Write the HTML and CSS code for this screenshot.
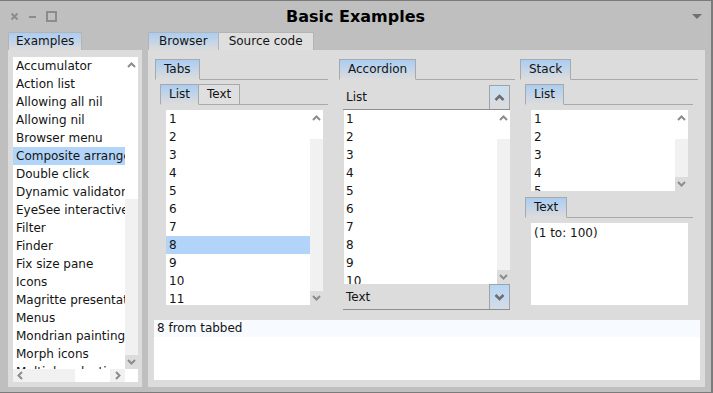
FILE: index.html
```html
<!DOCTYPE html>
<html lang="en">
<head>
    <meta charset="UTF-8">
    <title>Basic Examples</title>
    <link rel="stylesheet" href="styles.css">
</head>
<body>
<div class="window">

    <!-- Title bar -->
    <div class="titlebar">
        <div class="controls">
            <svg width="9" height="9" viewBox="0 0 9 9"><path d="M1.5 1.5 L7.5 7.5 M7.5 1.5 L1.5 7.5" stroke="#8c8c8c" stroke-width="2"/></svg>
            <svg width="9" height="9" viewBox="0 0 9 9"><path d="M1 5 H8" stroke="#8c8c8c" stroke-width="2"/></svg>
            <svg width="11" height="11" viewBox="0 0 11 11"><rect x="1" y="1" width="9" height="9" fill="none" stroke="#8c8c8c" stroke-width="2"/></svg>
        </div>
        <div class="title">Basic Examples</div>
        <div class="menu">
            <svg width="10" height="6" viewBox="0 0 10 6"><path d="M0 0 H10 L5 5 Z" fill="#707070"/></svg>
        </div>
    </div>

    <div class="main">
        <!-- Examples pane -->
        <div class="pane side">
            <div class="toptabs">
                <div class="tab active">Examples</div>
            </div>
            <div class="pane-body side-body">
                <div class="scrollbox">
                    <div class="scrollrow">
                        <ul class="list">
                            <li>Accumulator</li>
                            <li>Action list</li>
                            <li>Allowing all nil</li>
                            <li>Allowing nil</li>
                            <li>Browser menu</li>
                            <li class="selected">Composite arrangement</li>
                            <li>Double click</li>
                            <li>Dynamic validator</li>
                            <li>EyeSee interactive</li>
                            <li>Filter</li>
                            <li>Finder</li>
                            <li>Fix size pane</li>
                            <li>Icons</li>
                            <li>Magritte presentation</li>
                            <li>Menus</li>
                            <li>Mondrian painting</li>
                            <li>Morph icons</li>
                            <li>Multiple selection</li>
                        </ul>
                        <div class="vscroll">
                            <div class="thumb thumb-examples"><svg class="arrow" width="9" height="6" viewBox="0 0 9 6"><path d="M1 5 L4.5 1.5 L8 5" fill="none" stroke="#8c8c8c" stroke-width="2"/></svg></div>
                            <div class="track"></div>
                            <div class="down"><svg width="9" height="6" viewBox="0 0 9 6"><path d="M1 1 L4.5 4.5 L8 1" fill="none" stroke="#8c8c8c" stroke-width="2"/></svg></div>
                        </div>
                    </div>
                    <div class="hscroll">
                        <div class="htrack left"><svg width="6" height="9" viewBox="0 0 6 9"><path d="M5 1 L1.5 4.5 L5 8" fill="none" stroke="#8c8c8c" stroke-width="2"/></svg></div>
                        <div class="hthumb"></div>
                        <div class="htrack right"><svg width="6" height="9" viewBox="0 0 6 9"><path d="M1 1 L4.5 4.5 L1 8" fill="none" stroke="#8c8c8c" stroke-width="2"/></svg></div>
                        <div class="corner"></div>
                    </div>
                </div>
            </div>
        </div>

        <!-- Browser pane -->
        <div class="pane browser">
            <div class="toptabs">
                <div class="tab active">Browser</div>
                <div class="tab">Source code</div>
            </div>
            <div class="pane-body browser-body">
                <div class="columns">

                    <!-- Tabs column -->
                    <div class="col col-tabs">
                        <div class="tabrow">
                            <div class="tab active">Tabs</div>
                            <div class="tabline"></div>
                        </div>
                        <div class="inner">
                            <div class="tabrow">
                                <div class="tab active">List</div>
                                <div class="tab">Text</div>
                                <div class="tabline"></div>
                            </div>
                            <div class="listbox tabs-list">
                                <ul class="list">
                                    <li>1</li><li>2</li><li>3</li><li>4</li><li>5</li><li>6</li>
                                    <li>7</li><li class="selected">8</li><li>9</li><li>10</li><li>11</li><li>12</li>
                                </ul>
                                <div class="vscroll">
                                    <div class="thumb"><svg class="arrow" width="9" height="6" viewBox="0 0 9 6"><path d="M1 5 L4.5 1.5 L8 5" fill="none" stroke="#8c8c8c" stroke-width="2"/></svg></div>
                                    <div class="track"></div>
                                    <div class="down"><svg width="9" height="6" viewBox="0 0 9 6"><path d="M1 1 L4.5 4.5 L8 1" fill="none" stroke="#8c8c8c" stroke-width="2"/></svg></div>
                                </div>
                            </div>
                        </div>
                    </div>

                    <!-- Accordion column -->
                    <div class="col col-accordion">
                        <div class="tabrow">
                            <div class="tab active">Accordion</div>
                            <div class="tabline"></div>
                        </div>
                        <div class="accordion">
                            <div class="acc-head">
                                <span>List</span>
                                <div class="acc-btn"><svg width="11" height="7" viewBox="0 0 11 7"><path d="M1.5 6 L5.5 2 L9.5 6" fill="none" stroke="#6e6e6e" stroke-width="2.6"/></svg></div>
                            </div>
                            <div class="listbox acc-list">
                                <ul class="list">
                                    <li>1</li><li>2</li><li>3</li><li>4</li><li>5</li>
                                    <li>6</li><li>7</li><li>8</li><li>9</li><li>10</li>
                                </ul>
                                <div class="vscroll">
                                    <div class="thumb"><svg class="arrow" width="9" height="6" viewBox="0 0 9 6"><path d="M1 5 L4.5 1.5 L8 5" fill="none" stroke="#8c8c8c" stroke-width="2"/></svg></div>
                                    <div class="track"></div>
                                    <div class="down"><svg width="9" height="6" viewBox="0 0 9 6"><path d="M1 1 L4.5 4.5 L8 1" fill="none" stroke="#8c8c8c" stroke-width="2"/></svg></div>
                                </div>
                            </div>
                            <div class="acc-head last">
                                <span>Text</span>
                                <div class="acc-btn"><svg width="11" height="7" viewBox="0 0 11 7"><path d="M1.5 1 L5.5 5 L9.5 1" fill="none" stroke="#6e6e6e" stroke-width="2.6"/></svg></div>
                            </div>
                        </div>
                    </div>

                    <!-- Stack column -->
                    <div class="col col-stack">
                        <div class="tabrow">
                            <div class="tab active">Stack</div>
                            <div class="tabline"></div>
                        </div>
                        <div class="inner">
                            <div class="tabrow">
                                <div class="tab active">List</div>
                                <div class="tabline"></div>
                            </div>
                            <div class="listbox stack-list">
                                <ul class="list">
                                    <li>1</li><li>2</li><li>3</li><li>4</li><li>5</li>
                                </ul>
                                <div class="vscroll">
                                    <div class="thumb"><svg class="arrow" width="9" height="6" viewBox="0 0 9 6"><path d="M1 5 L4.5 1.5 L8 5" fill="none" stroke="#8c8c8c" stroke-width="2"/></svg></div>
                                    <div class="track"></div>
                                    <div class="down"><svg width="9" height="6" viewBox="0 0 9 6"><path d="M1 1 L4.5 4.5 L8 1" fill="none" stroke="#8c8c8c" stroke-width="2"/></svg></div>
                                </div>
                            </div>
                            <div class="tabrow text-tabs">
                                <div class="tab active">Text</div>
                                <div class="tabline"></div>
                            </div>
                            <div class="textbox">(1 to: 100)</div>
                        </div>
                    </div>

                </div>

                <div class="output"><div class="first-line">8 from tabbed</div></div>
            </div>
        </div>
    </div>
</div>
</body>
</html>
```

FILE: styles.css
```css
/* Window */
body {
    margin: 0;
    width: 713px;
    height: 393px;
    overflow: hidden;
    font-family: "DejaVu Sans", sans-serif;
    font-size: 12px;
    color: #141414;
}

.window {
    box-sizing: border-box;
    width: 713px;
    height: 393px;
    background: #bfbfbf;
    border-top: 1px solid #7b7b7b;
    border-right: 2px solid #7b7b7b;
    border-bottom: 1px solid #7b7b7b;
    display: flex;
    flex-direction: column;
}

/* Title bar */
.titlebar {
    flex-shrink: 0;
    height: 30px;
    display: grid;
    grid-template-columns: 1fr auto 1fr;
    align-items: center;
}

.controls {
    display: flex;
    align-items: center;
    gap: 9px;
    padding-left: 10px;
}

.controls svg {
    display: block;
}

.title {
    font-weight: bold;
    font-size: 16px;
    color: #000;
    padding-top: 1px;
}

.menu {
    justify-self: end;
    padding-right: 9px;
    padding-top: 2px;
}

.menu svg {
    display: block;
}

/* Main area */
.main {
    box-sizing: border-box;
    height: 361px;
    display: flex;
    gap: 6px;
    padding: 1px 6px 5px 8px;
}

.pane {
    display: flex;
    flex-direction: column;
    min-width: 0;
}

.side {
    flex: 0 0 134px;
    overflow: hidden;
}

.browser {
    flex: 1;
}

.pane-body {
    height: 337px;
    box-sizing: border-box;
    background: #dcdcdc;
}

/* Tabs */
.toptabs {
    display: flex;
    height: 18px;
}

.tab {
    box-sizing: border-box;
    padding: 0 8px;
    border: 1px solid #b4b4b4;
    background: #dfdfdf;
    white-space: nowrap;
}

.toptabs .tab {
    height: 18px;
    line-height: 16px;
    padding: 0 7px;
    border-bottom: none;
}

.browser .toptabs .tab {
    padding: 0 10px;
}

.tab.active {
    background: linear-gradient(#aacdf3, #dcdcdc);
}

.toptabs .tab + .tab {
    border-left: none;
}

.tabrow {
    display: flex;
    height: 21px;
    flex-shrink: 0;
}

.tabrow .tab {
    height: 21px;
    line-height: 19px;
    border-color: #a9a9a9;
}

.tabrow .tab.active {
    border-bottom-color: #dcdcdc;
}

.tabrow .tab + .tab {
    border-left: none;
}

.tabline {
    flex: 1;
    border-bottom: 1px solid #a9a9a9;
}

/* Lists */
.list {
    list-style: none;
    margin: 0;
    padding: 0;
    flex: 1;
    background: #fff;
    overflow: hidden;
    min-width: 0;
}

.list li {
    height: 18px;
    line-height: 18px;
    padding-left: 3px;
    white-space: nowrap;
    overflow: hidden;
}

.list li.selected {
    background: #b2d4f8;
}

.vscroll {
    flex: 0 0 13px;
    display: flex;
    flex-direction: column;
}

.vscroll .thumb {
    height: 29px;
    background: #fff;
}

.vscroll .arrow {
    display: block;
    margin: 5px auto 0;
}

.vscroll .track {
    flex: 1;
    background: #f1f1f1;
}

.vscroll .down {
    height: 14px;
    display: flex;
    align-items: center;
    justify-content: center;
}

/* Examples list */
.side-body {
    padding: 7px 4px 5px 5px;
    display: flex;
}

.scrollbox {
    flex: 1;
    min-width: 0;
    min-height: 0;
    display: flex;
    flex-direction: column;
}

.scrollrow {
    flex: 1;
    display: flex;
    min-height: 0;
}

.vscroll .thumb-examples {
    height: 142px;
}

.hscroll {
    flex: 0 0 13px;
    display: flex;
}

.htrack {
    background: #f1f1f1;
    display: flex;
    align-items: center;
}

.htrack.left {
    width: 62px;
    padding-left: 4px;
    box-sizing: border-box;
}

.htrack.right {
    width: 15px;
    padding-left: 5px;
    box-sizing: border-box;
}

.hthumb {
    width: 35px;
    background: #fff;
}

.corner {
    width: 13px;
    background: #fff;
}

/* Browser pane */
.browser-body {
    padding: 9px 7px 7px 7px;
    display: flex;
    flex-direction: column;
}

.columns {
    height: 252px;
    flex-shrink: 0;
    display: flex;
}

.col {
    display: flex;
    flex-direction: column;
    min-height: 0;
}

.col-tabs {
    width: 173px;
}

.col-accordion {
    width: 176px;
    margin-left: 11px;
}

.col-stack {
    width: 178px;
    margin-left: 5px;
}

.inner {
    margin: 4px 5px 0 5px;
    display: flex;
    flex-direction: column;
}

.col-tabs .inner {
    margin-right: 0;
}

.listbox {
    display: flex;
    flex-shrink: 0;
    margin: 5px 5px 0 6px;
}

.tabs-list {
    height: 195px;
}

.stack-list {
    height: 81px;
}

/* Accordion */
.accordion {
    margin: 5px 5px 0 4px;
    display: flex;
    flex-direction: column;
}

.acc-head {
    flex-shrink: 0;
    height: 24px;
    display: flex;
    align-items: center;
    justify-content: space-between;
    border-bottom: 1px solid #8e8e8e;
}

.acc-head span {
    padding-left: 3px;
}

.acc-head.last {
    height: 25px;
}

.acc-btn {
    box-sizing: border-box;
    width: 21px;
    height: 100%;
    border: 1px solid #a2a2a2;
    border-bottom: none;
    background: linear-gradient(#c9dff3, #dcdcdc);
    display: flex;
    align-items: center;
    justify-content: center;
}

.acc-head.last .acc-btn {
    background: linear-gradient(#b6d6f7, #d4dce4);
}

.acc-list {
    height: 174px;
    margin: 0 0 0 1px;
}

.acc-list .list li {
    padding-left: 2px;
}

/* Stack */
.text-tabs {
    margin-top: 6px;
}

.textbox {
    height: 82px;
    flex-shrink: 0;
    margin: 5px 5px 0 6px;
    background: #fff;
    padding: 2px 3px;
    box-sizing: border-box;
    line-height: 16px;
}

/* Output */
.output {
    margin: 9px -2px 0 -1px;
    height: 60px;
    flex-shrink: 0;
    background: #fff;
}

.output .first-line {
    background: #f7fafe;
    height: 17px;
    line-height: 17px;
    padding-left: 3px;
}
```
